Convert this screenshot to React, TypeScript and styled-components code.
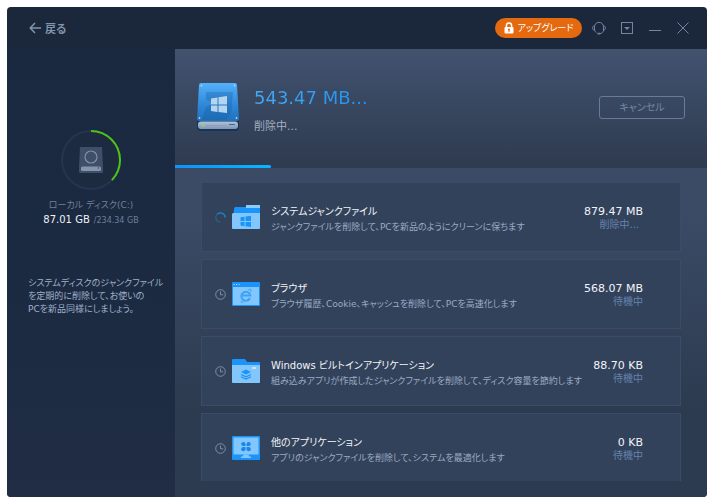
import React from "react";
import styled, { createGlobalStyle, keyframes } from "styled-components";

const GlobalStyle = createGlobalStyle`
  *, *::before, *::after { box-sizing: border-box; }
  body {
    margin: 0;
    background: #ffffff;
    font-family: "DejaVu Sans", "Noto Sans CJK JP", sans-serif;
    font-feature-settings: "palt";
  }
  button {
    font-family: "Noto Sans CJK JP", sans-serif;
    font-feature-settings: inherit;
    cursor: pointer;
  }
  h1, h2, p { margin: 0; font-weight: 400; }
`;

const Window = styled.div`
  display: flex;
  flex-direction: column;
  height: calc(100vh - 14px);
  margin: 7px;
  border-radius: 4px;
  overflow: hidden;
  background: #1b273a;
`;

const TitleBar = styled.header`
  display: flex;
  align-items: center;
  flex: none;
  height: 42px;
  padding: 0 10px 0 22px;
`;

const BackButton = styled.button`
  display: flex;
  align-items: center;
  gap: 4px;
  margin-right: auto;
  padding: 0;
  border: 0;
  background: none;
  color: #8194ae;
  font-size: 11px;
  font-weight: 700;
  line-height: 16px;
`;

const UpgradeButton = styled.button`
  display: flex;
  align-items: center;
  justify-content: center;
  gap: 4px;
  width: 87px;
  height: 20px;
  margin-right: 3px;
  padding: 0;
  border: 0;
  border-radius: 10px;
  background: #e4690f;
  color: #ffffff;
  font-size: 9px;
  line-height: 14px;
  white-space: nowrap;
`;

const WindowButton = styled.button`
  display: flex;
  align-items: center;
  justify-content: center;
  width: 28px;
  height: 28px;
  padding: 0;
  border: 0;
  background: none;
  color: #7286a3;
`;

const Body = styled.div`
  display: flex;
  flex: 1;
  min-height: 0;
`;

const Sidebar = styled.aside`
  flex: none;
  width: 168px;
  padding-top: 80px;
  background: linear-gradient(#1a2840, #1b2a41 45%, #202d44);
`;

const DiskSummary = styled.section`
  display: flex;
  flex-direction: column;
  align-items: center;
`;

const DiskName = styled.h2`
  margin-top: 6px;
  color: #71809a;
  font-size: 9px;
  line-height: 16px;
`;

const DiskUsage = styled.p`
  color: #6f7f99;
  font-size: 8px;
  line-height: 14px;
`;

const UsedSpace = styled.strong`
  margin-right: 4px;
  color: #eef2f7;
  font-size: 10px;
  font-weight: 400;
`;

const SidebarHint = styled.p`
  margin: 49px 12px 0 21px;
  color: #9fb0c8;
  font-size: 9px;
  line-height: 13px;
  white-space: nowrap;
`;

const Main = styled.main`
  display: flex;
  flex-direction: column;
  flex: 1;
  min-width: 0;
  background: linear-gradient(#3b4b66 36%, #2d3b50 80%);
`;

const Hero = styled.section`
  display: flex;
  align-items: center;
  flex: none;
  height: 116px;
  padding: 0 22px 0 20px;
  background: linear-gradient(#42526f, #2e3b50);
`;

const HeroText = styled.div`
  flex: 1;
  margin-left: 13px;
  padding-top: 6px;
`;

const HeroSize = styled.h1`
  background: linear-gradient(90deg, #45a9f3, #1f8ff0 120px);
  background-clip: text;
  color: transparent;
  font-size: 18px;
  line-height: 26px;
`;

const HeroStatus = styled.p`
  margin-top: 7px;
  color: #a4b0c2;
  font-size: 11px;
  line-height: 18px;
`;

const CancelButton = styled.button`
  width: 86px;
  height: 23px;
  padding: 0;
  border: 1px solid #667b9a;
  border-radius: 3px;
  background: transparent;
  color: #7589a8;
  font-size: 10px;
  line-height: 14px;
`;

const ProgressTrack = styled.div`
  flex: none;
  height: 3px;
  background: #2f3d53;
`;

const ProgressFill = styled.div`
  height: 3px;
  border-radius: 0 2px 2px 0;
  background: linear-gradient(90deg, #0d94fb, #08b5ff);
`;

const TaskList = styled.ul`
  display: flex;
  flex-direction: column;
  flex: 1;
  gap: 7px;
  min-height: 0;
  margin: 14px 26px 16px;
  padding: 0;
  overflow: hidden;
  list-style: none;
`;

const TaskCard = styled.li`
  display: flex;
  align-items: center;
  flex: none;
  height: 70px;
  padding: 0 37px 0 13px;
  border: 1px solid #3c4c67;
  background: #33425b;
`;

const TaskIcon = styled.span`
  display: flex;
  margin: 0 11px 0 6px;
`;

const TaskText = styled.div`
  flex: 1;
  min-width: 0;
  padding-top: 4px;
  white-space: nowrap;
`;

const TaskTitle = styled.h2`
  color: #f1f4f8;
  font-size: 10px;
  line-height: 16px;
`;

const TaskDescription = styled.p`
  color: #9aabc3;
  font-size: 9px;
  line-height: 14px;
`;

const TaskResult = styled.div`
  padding-top: 2px;
  text-align: right;
`;

const TaskSize = styled.p`
  color: #f1f4f8;
  font-size: 11px;
  line-height: 13px;
`;

const TaskState = styled.p<{ $active?: boolean }>`
  padding-right: ${(p) => (p.$active ? "4px" : "0")};
  color: #6482ad;
  font-size: 10px;
  line-height: 13px;
`;

const turn = keyframes`to { transform: rotate(360deg); }`;

const Spinner = styled.svg`
  animation: ${turn} 1s linear 5s infinite;
`;

function BackArrow() {
  return (
    <svg width="12" height="12" viewBox="0 0 12 12" fill="none" stroke="currentColor" strokeWidth="1.5">
      <path d="M6 1 1.2 6 6 11M1.2 6H12" />
    </svg>
  );
}

function LockIcon() {
  return (
    <svg width="10" height="12" viewBox="0 0 10 12">
      <path d="M2.4 5.5V3.6a2.6 2.6 0 0 1 5.2 0v1.9" fill="none" stroke="#fff" strokeWidth="1.5" />
      <rect x="0.5" y="5" width="9" height="6.5" rx="1" fill="#fff" />
      <circle cx="5" cy="7.6" r="1" fill="#e4690f" />
      <path d="M5 8v2.2" stroke="#e4690f" strokeWidth="1" />
    </svg>
  );
}

function HeadsetIcon() {
  return (
    <svg width="14" height="14" viewBox="0 0 14 14" fill="none" stroke="currentColor">
      <path d="M2.5 9V5.8a4.5 4.5 0 0 1 9 0V9c0 2-1.500 3.400-3.500 3.600" />
      <path d="M2.5 5.2H1.6a1 1 0 0 0-.9 1v1.6a1 1 0 0 0 .9 1h.9M11.5 5.2h.9a1 1 0 0 1 .9 1v1.6a1 1 0 0 1-.9 1h-.9" />
      <path d="M5.500 12.600h2.800" strokeWidth="1.600" />
      <path d="M2.500 9a4.500 4.500 0 0 0 2 2.700" />
    </svg>
  );
}

function MenuIcon() {
  return (
    <svg width="12" height="12" viewBox="0 0 12 12">
      <rect x="0.5" y="0.5" width="11" height="11" fill="none" stroke="currentColor" />
      <path d="M3 5h6L6 8z" fill="currentColor" />
    </svg>
  );
}

function MinimizeIcon() {
  return (
    <svg width="12" height="12" viewBox="0 0 12 12">
      <path d="M0 8.5h12" stroke="currentColor" />
    </svg>
  );
}

function CloseIcon() {
  return (
    <svg width="12" height="12" viewBox="0 0 12 12">
      <path d="M.5.5l11 11M11.5.5l-11 11" stroke="currentColor" />
    </svg>
  );
}

function DiskGauge({ ratio }: { ratio: number }) {
  const length = 2 * Math.PI * 29;
  return (
    <svg width="62" height="62" viewBox="0 0 62 62" role="img" aria-label="ディスク使用量">
      <circle cx="31" cy="31" r="29" fill="#1d2b41" stroke="#26354f" strokeWidth="2" />
      <circle
        cx="31"
        cy="31"
        r="29"
        fill="none"
        stroke="#4cc417"
        strokeWidth="2"
        strokeDasharray={`${length * ratio} ${length}`}
        transform="rotate(-90 31 31)"
      />
      <path d="M20 18h22l1 20v4.500a1.500 1.500 0 0 1-1.500 1.500h-21A1.500 1.500 0 0 1 19 42.500V38z" fill="#3f4f6a" />
      <circle cx="31" cy="28" r="6" fill="none" stroke="#8290a6" strokeWidth="1.200" />
      <rect x="21" y="37.500" width="20" height="4.500" rx="1.500" fill="#8795aa" />
      <circle cx="38.500" cy="39" r="0.800" fill="#3f4f6a" />
    </svg>
  );
}

function WindowsDriveIcon() {
  return (
    <svg width="46" height="50" viewBox="0 0 46 50">
      <defs>
        <linearGradient id="drive-top" x1="0" y1="0" x2="0" y2="1">
          <stop offset="0" stopColor="#55b1fb" />
          <stop offset="0.6" stopColor="#2d86d6" />
          <stop offset="1" stopColor="#2072bd" />
        </linearGradient>
        <linearGradient id="drive-front" x1="0" y1="0" x2="0" y2="1">
          <stop offset="0" stopColor="#b3c2d8" />
          <stop offset="1" stopColor="#7f95b4" />
        </linearGradient>
      </defs>
      <path d="M5 2h36l3 36v7a4 4 0 0 1-4 4H6a4 4 0 0 1-4-4v-7z" fill="#173556" />
      <path d="M6 1h34a2 2 0 0 1 2 2l2 34a2 2 0 0 1-2 2H4a2 2 0 0 1-2-2L4 3a2 2 0 0 1 2-2z" fill="url(#drive-top)" />
      <path d="M11 10h27l-2 22-5 6H7l4-13 8-4-8-3z" fill="#145b9c" opacity="0.3" />
      <path d="M16 16.500 22.500 15.500v7H16zM23.500 15.300 32 14v8.500h-8.500zM16 23.500h6.500v6.500L16 29zM23.500 23.500H32V31l-8.500-1z" fill="#b5d5ef" />
      <rect x="3" y="39.500" width="40" height="7.500" rx="3" fill="url(#drive-front)" />
      <circle cx="8" cy="43.300" r="1.200" fill="#8fd36a" />
      <path d="M12 43.500h20" stroke="#8298b5" strokeDasharray="1 1" />
      <path d="M34 42.500h6" stroke="#356da7" strokeWidth="1.200" />
      <g fill="#a4d6ff">
        <circle cx="6.500" cy="3.500" r="0.900" />
        <circle cx="39.500" cy="3.500" r="0.900" />
        <circle cx="4.500" cy="36" r="0.900" />
        <circle cx="41.500" cy="36" r="0.900" />
      </g>
    </svg>
  );
}

function ClockIcon() {
  return (
    <svg width="11" height="11" viewBox="0 0 11 11" fill="none" stroke="#7d8da8">
      <circle cx="5.500" cy="5.500" r="4.800" />
      <path d="M5.500 2.500v3.300h2.700" />
    </svg>
  );
}

function ProgressSpinner() {
  return (
    <Spinner width="11" height="11" viewBox="0 0 11 11" fill="none">
      <path d="M5.500 10.200A4.700 4.700 0 0 1 2.200 2.200" stroke="#2c6186" strokeWidth="1.200" />
      <path d="M2.200 2.200A4.700 4.700 0 0 1 10.200 5.500" stroke="#168fd0" strokeWidth="1.200" />
    </Spinner>
  );
}

function JunkFolderIcon() {
  return (
    <svg width="28" height="24" viewBox="0 0 28 24">
      <path d="M14 2V0h14v10H14z" fill="#8acbfd" />
      <path d="M3 2h11v1h14v6H1.500L2 4z" fill="#1a94fa" />
      <path d="M1 8h27v15a1 1 0 0 1-1 1H1a1 1 0 0 1-1-1V9z" fill="#83c6fb" />
      <path d="M8.500 12.300l4-.6V16h-4zM13.500 11.500l5.500-.8V16h-5.500zM8.500 17h4v4.200l-4-.6zM13.500 17H19v5l-5.500-.7z" fill="#1a94fa" />
    </svg>
  );
}

function BrowserIcon() {
  return (
    <svg width="28" height="24" viewBox="0 0 28 24">
      <rect width="28" height="24" rx="1" fill="#1a94fa" />
      <path d="M1 5h26v18H1z" fill="#83c6fb" />
      <path d="M1.500 2.500h1.200M4 2.500h1.200M6.500 2.500h1.200" stroke="#a8d8ff" />
      <path d="M18 16a4.500 4.500 0 1 1 .3-2.500H10.500" fill="none" stroke="#3ba3f7" strokeWidth="2" />
      <path d="M10 18.500c-2 2.400-.3 2.700 2 1M16 8c2.500-1.400 4-.8 2.400 2.200" fill="none" stroke="#3ba3f7" />
    </svg>
  );
}

function AppFolderIcon() {
  return (
    <svg width="28" height="24" viewBox="0 0 28 24">
      <path d="M1 0h12l2 3h12a1 1 0 0 1 1 1v6H0V1a1 1 0 0 1 1-1z" fill="#1a94fa" />
      <path d="M0 6h28v17a1 1 0 0 1-1 1H1a1 1 0 0 1-1-1z" fill="#83c6fb" />
      <path d="M20 9h4" stroke="#c5e5fd" strokeWidth="2" />
      <path d="M9 13l5-2.500 5 2.500-5 2.500z" fill="#1a94fa" />
      <path d="M9 15.500l5 2.300 5-2.300M9 17.800l5 2.300 5-2.300" fill="none" stroke="#1a94fa" strokeWidth="1.200" />
    </svg>
  );
}

function MonitorIcon() {
  return (
    <svg width="28" height="24" viewBox="0 0 28 24">
      <rect width="28" height="24" rx="1" fill="#1a94fa" />
      <path d="M1.500 1.500h25v17h-25z" fill="#83c6fb" />
      <path d="M11.500 18.500h5l.5 2h2V22H9v-1.500h2z" fill="#83c6fb" />
      <g fill="#1a86e8">
        <circle cx="11.300" cy="8" r="2.100" />
        <circle cx="16.700" cy="8" r="2.100" />
        <circle cx="11.300" cy="13.200" r="2.100" />
        <circle cx="16.700" cy="13.200" r="2.100" />
        <path d="M11.300 8h2.100v2.100h-2.100zM14.600 8h2.100v2.100h-2.100zM11.300 11.100h2.100v2.100h-2.100zM14.600 11.100h2.100v2.100h-2.100z" />
      </g>
    </svg>
  );
}

interface Task {
  title: string;
  description: string;
  size: string;
  active?: boolean;
  Icon: () => React.ReactElement;
}

const tasks: Task[] = [
  {
    title: "システムジャンクファイル",
    description: "ジャンクファイルを削除して、PCを新品のようにクリーンに保ちます",
    size: "879.47 MB",
    active: true,
    Icon: JunkFolderIcon,
  },
  {
    title: "ブラウザ",
    description: "ブラウザ履歴、Cookie、キャッシュを削除して、PCを高速化します",
    size: "568.07 MB",
    Icon: BrowserIcon,
  },
  {
    title: "Windows ビルトインアプリケーション",
    description: "組み込みアプリが作成したジャンクファイルを削除して、ディスク容量を節約します",
    size: "88.70 KB",
    Icon: AppFolderIcon,
  },
  {
    title: "他のアプリケーション",
    description: "アプリのジャンクファイルを削除して、システムを最適化します",
    size: "0 KB",
    Icon: MonitorIcon,
  },
];

function TaskRow({ title, description, size, active, Icon }: Task) {
  return (
    <TaskCard>
      {active ? <ProgressSpinner /> : <ClockIcon />}
      <TaskIcon>
        <Icon />
      </TaskIcon>
      <TaskText>
        <TaskTitle>{title}</TaskTitle>
        <TaskDescription>{description}</TaskDescription>
      </TaskText>
      <TaskResult>
        <TaskSize>{size}</TaskSize>
        <TaskState $active={active}>{active ? "削除中..." : "待機中"}</TaskState>
      </TaskResult>
    </TaskCard>
  );
}

export default function App() {
  const progress = 18;
  return (
    <>
      <GlobalStyle />
      <Window lang="ja">
        <TitleBar>
          <BackButton type="button">
            <BackArrow />
            戻る
          </BackButton>
          <UpgradeButton type="button">
            <LockIcon />
            アップグレード
          </UpgradeButton>
          <WindowButton type="button" aria-label="サポート"><HeadsetIcon /></WindowButton>
          <WindowButton type="button" aria-label="メニュー"><MenuIcon /></WindowButton>
          <WindowButton type="button" aria-label="最小化"><MinimizeIcon /></WindowButton>
          <WindowButton type="button" aria-label="閉じる"><CloseIcon /></WindowButton>
        </TitleBar>
        <Body>
          <Sidebar>
            <DiskSummary>
              <DiskGauge ratio={87.01 / 234.34} />
              <DiskName>ローカル ディスク(C:)</DiskName>
              <DiskUsage>
                <UsedSpace>87.01 GB</UsedSpace>/234.34 GB
              </DiskUsage>
            </DiskSummary>
            <SidebarHint>
              システムディスクのジャンクファイル
              <br />
              を定期的に削除して、お使いの
              <br />
              PCを新品同様にしましょう。
            </SidebarHint>
          </Sidebar>
          <Main>
            <Hero>
              <WindowsDriveIcon />
              <HeroText>
                <HeroSize>543.47 MB...</HeroSize>
                <HeroStatus>削除中...</HeroStatus>
              </HeroText>
              <CancelButton type="button">キャンセル</CancelButton>
            </Hero>
            <ProgressTrack role="progressbar" aria-label="削除の進行状況" aria-valuenow={progress} aria-valuemin={0} aria-valuemax={100}>
              <ProgressFill style={{ width: `${progress}%` }} />
            </ProgressTrack>
            <TaskList>
              {tasks.map((task) => (
                <TaskRow key={task.title} {...task} />
              ))}
            </TaskList>
          </Main>
        </Body>
      </Window>
    </>
  );
}
